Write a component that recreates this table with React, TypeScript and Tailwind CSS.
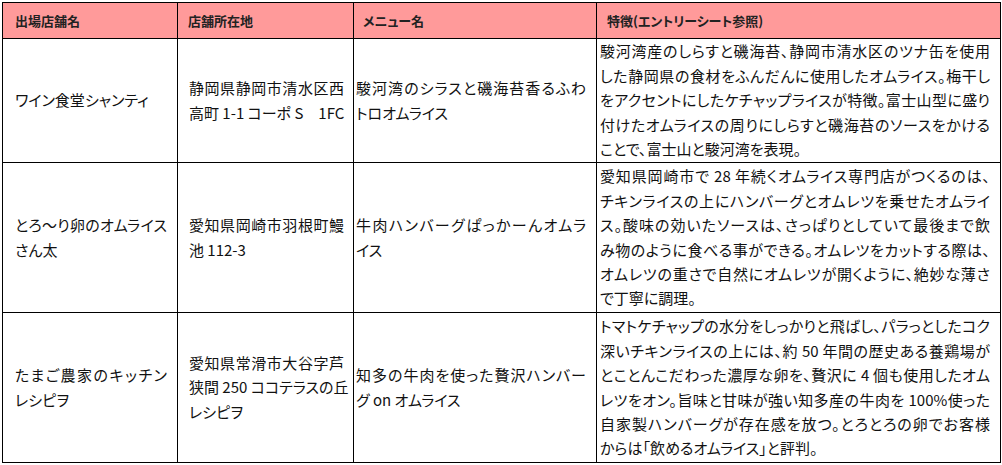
import React from 'react';

type Cell = { lines: string[]; justify?: number[] };

interface Row {
  height: number;
  cells: Cell[];
}

const headers = ['出場店舗名', '店舗所在地', 'メニュー名', '特徴(エントリーシート参照)'];

const rows: Row[] = [
  {
    height: 124,
    cells: [
      { lines: ['ワイン食堂シャンティ'] },
      { lines: ['静岡県静岡市清水区西', '高町 1-1 コーポ S　1FC'], justify: [0, 1] },
      { lines: ['駿河湾のシラスと磯海苔香るふわ', 'トロオムライス'], justify: [0] },
      {
        lines: [
          '駿河湾産のしらすと磯海苔、静岡市清水区のツナ缶を使用',
          'した静岡県の食材をふんだんに使用したオムライス。梅干し',
          'をアクセントにしたケチャップライスが特徴。富士山型に盛り',
          '付けたオムライスの周りにしらすと磯海苔のソースをかける',
          'ことで、富士山と駿河湾を表現。',
        ],
        justify: [0, 1, 2, 3],
      },
    ],
  },
  {
    height: 150,
    cells: [
      { lines: ['とろ〜り卵のオムライス', 'さん太'], justify: [0] },
      { lines: ['愛知県岡崎市羽根町鰻', '池 112-3'], justify: [0] },
      { lines: ['牛肉ハンバーグぱっかーんオムラ', 'イス'], justify: [0] },
      {
        lines: [
          '愛知県岡崎市で 28 年続くオムライス専門店がつくるのは、',
          'チキンライスの上にハンバーグとオムレツを乗せたオムライ',
          'ス。酸味の効いたソースは、さっぱりとしていて最後まで飲',
          'み物のように食べる事ができる。オムレツをカットする際は、',
          'オムレツの重さで自然にオムレツが開くように、絶妙な薄さ',
          'で丁寧に調理。',
        ],
        justify: [0, 1, 2, 3, 4],
      },
    ],
  },
  {
    height: 150,
    cells: [
      { lines: ['たまご農家のキッチン', 'レシピヲ'], justify: [0] },
      { lines: ['愛知県常滑市大谷字芦', '狭間 250 ココテラスの丘', 'レシピヲ'], justify: [0, 1] },
      { lines: ['知多の牛肉を使った贅沢ハンバー', 'グ on オムライス'], justify: [0] },
      {
        lines: [
          'トマトケチャップの水分をしっかりと飛ばし、パラっとしたコク',
          '深いチキンライスの上には、約 50 年間の歴史ある養鶏場が',
          'とことんこだわった濃厚な卵を、贅沢に 4 個も使用したオム',
          'レツをオン。旨味と甘味が強い知多産の牛肉を 100%使った',
          '自家製ハンバーグが存在感を放つ。とろとろの卵でお客様',
          'からは「飲めるオムライス」と評判。',
        ],
        justify: [0, 1, 2, 3, 4],
      },
    ],
  },
];

// padding per column, measured off the screenshot
const cellPad = ['pl-[12px] pr-[10px]', 'pl-[11px] pr-[9px]', 'pl-[2px] pr-[10px]', 'pl-[3px] pr-[10px]'];
const headPad = ['pl-[12px]', 'pl-[10px]', 'pl-[9px]', 'pl-[10px]'];

export default function App() {
  return (
    <div
      className="w-[1002px] h-[465px] bg-white pl-[2px] pt-[2px] text-[#111]"
      style={{ fontFamily: '"Noto Sans CJK JP", "Noto Sans", sans-serif', fontFeatureSettings: '"palt"' }}
    >
      <table className="w-[998px] table-fixed border-collapse">
        <colgroup>
          <col className="w-[175px]" />
          <col className="w-[176px]" />
          <col className="w-[243px]" />
          <col className="w-[404px]" />
        </colgroup>
        <thead>
          <tr className="h-[36px] bg-[#ff9a9a]">
            {headers.map((h, i) => (
              <th
                key={h}
                className={`border border-black text-left align-middle text-[13px] font-bold text-[#222] ${headPad[i]}`}
              >
                {h}
              </th>
            ))}
          </tr>
        </thead>
        <tbody>
          {rows.map((row, r) => (
            <tr key={r} style={{ height: row.height }}>
              {row.cells.map((cell, c) => (
                <td key={c} className={`border border-black p-0 align-middle text-[15px] leading-[24.4px] ${cellPad[c]}`}>
                  {cell.lines.map((line, k) => (
                    <span
                      key={k}
                      className={`block whitespace-nowrap ${
                        cell.justify?.includes(k) ? 'text-justify [text-align-last:justify]' : 'text-left'
                      }`}
                    >
                      {line}
                    </span>
                  ))}
                </td>
              ))}
            </tr>
          ))}
        </tbody>
      </table>
    </div>
  );
}
